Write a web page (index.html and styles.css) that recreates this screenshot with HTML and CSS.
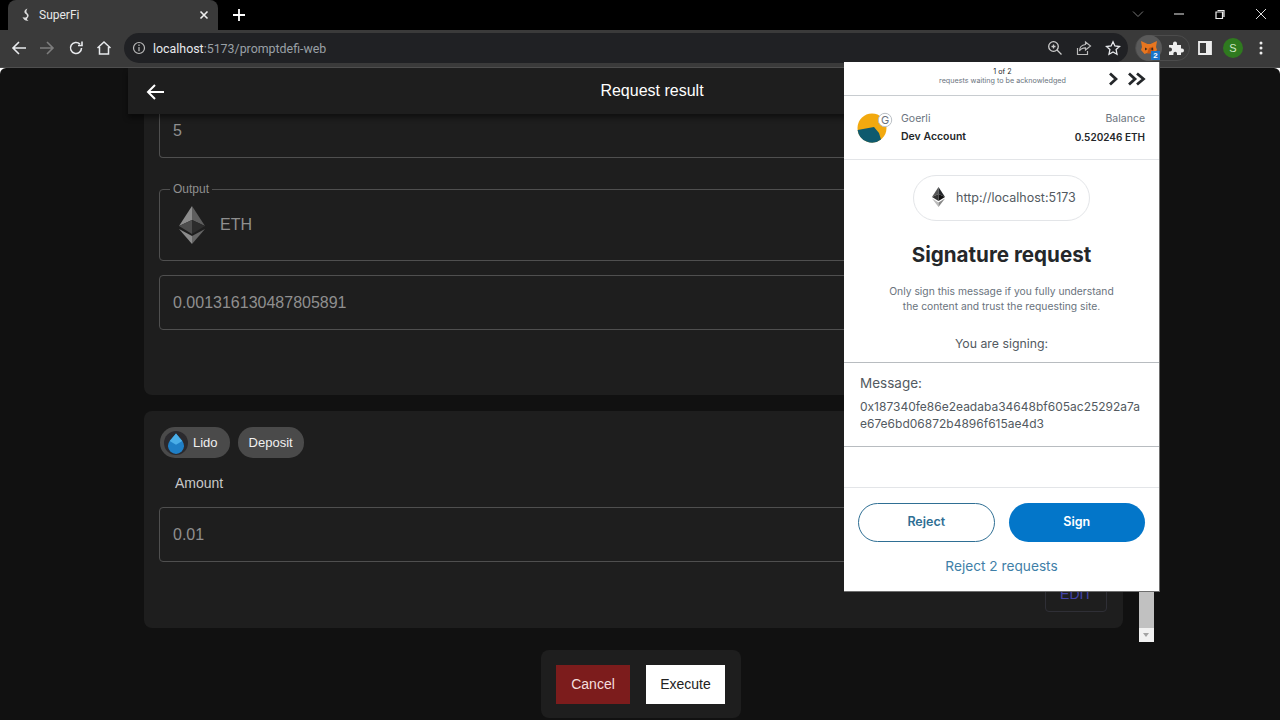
FILE: index.html
```html
<!DOCTYPE html>
<html lang="en">
<head>
    <meta charset="UTF-8">
    <title>SuperFi</title>
    <link rel="stylesheet" href="styles.css">
</head>
<body>
    <div class="tabstrip">
        <div class="tab">
            <svg class="tab_icon" width="16" height="16" viewBox="0 0 16 16"><path d="M9.500 1.500C7 2.500 6 4 6.500 5.500c.5 1.500 2.500 1.500 2.500 3.500 0 1.500-2 2-4.500 1 1 2.500 3.500 4.500 6 3.500-1.500-.5-2-1.500-1-2.500 1.500-1.500 1.500-3.500 0-4.500-1.500-1-1.500-3 0-5z" fill="#ddd"/></svg>
            <span class="tab_title">SuperFi</span>
            <svg class="tab_close" width="10" height="10" viewBox="0 0 10 10"><path d="M1.500 1.500l7 7M8.500 1.500l-7 7" stroke="#eee" stroke-width="1.600"/></svg>
        </div>
        <svg class="new_tab" width="14" height="14" viewBox="0 0 14 14"><path d="M7 1v12M1 7h12" stroke="#fff" stroke-width="1.800"/></svg>
        <div class="win_controls">
            <svg width="12" height="12" viewBox="0 0 12 12"><path d="M1 3.500l5 5 5-5" fill="none" stroke="#777" stroke-width="1"/></svg>
            <svg width="12" height="12" viewBox="0 0 12 12"><path d="M1 6h10" stroke="#eee" stroke-width="1"/></svg>
            <svg width="12" height="12" viewBox="0 0 12 12"><path d="M3.500 2.500h6.500v6.500M2 4h6.500v6.500h-6.500z" fill="none" stroke="#eee" stroke-width="1.200"/></svg>
            <svg width="12" height="12" viewBox="0 0 12 12"><path d="M1 1l10 10M11 1l-10 10" stroke="#ddd" stroke-width="1"/></svg>
        </div>
    </div>

    <div class="toolbar">
        <svg class="tool" width="16" height="16" viewBox="0 0 16 16"><path d="M15 8H2M8 2L2 8l6 6" fill="none" stroke="#e8eaed" stroke-width="1.600"/></svg>
        <svg class="tool" width="16" height="16" viewBox="0 0 16 16"><path d="M1 8h13M8 2l6 6-6 6" fill="none" stroke="#7d7d7d" stroke-width="1.600"/></svg>
        <svg class="tool tool_reload" width="16" height="16" viewBox="0 0 16 16"><path d="M13.500 8a5.500 5.500 0 1 1-1.600-3.900M14 1.500v4h-4" fill="none" stroke="#e8eaed" stroke-width="1.600"/></svg>
        <svg class="tool" width="16" height="16" viewBox="0 0 16 16"><path d="M1.500 8L8 2l6.500 6M3.500 7v7h9V7" fill="none" stroke="#e8eaed" stroke-width="1.500"/></svg>
        <div class="omnibox">
            <svg width="14" height="14" viewBox="0 0 14 14"><circle cx="7" cy="7" r="5.500" fill="none" stroke="#bbb" stroke-width="1.200"/><path d="M7 6v4.200M7 3.600v1.400" stroke="#bbb" stroke-width="1.200"/></svg>
            <span class="url"><span class="url_host">localhost</span>:5173/promptdefi-web</span>
            <div class="omni_icons">
                <svg width="16" height="16" viewBox="0 0 16 16"><circle cx="6.500" cy="6.500" r="4.800" fill="none" stroke="#ccc" stroke-width="1.300"/><path d="M10 10l4.500 4.500M6.500 4.500v4M4.500 6.500h4" stroke="#ccc" stroke-width="1.300"/></svg>
                <svg width="16" height="16" viewBox="0 0 16 16"><path d="M1.500 8v6.500h10V11M9.500 2l5 4-5 4V7.800c-3 0-5 1-6 3.200 0-3.500 2-6 6-6.500z" fill="none" stroke="#bbb" stroke-width="1.200"/></svg>
                <svg width="16" height="16" viewBox="0 0 16 16"><path d="M8 1.800l1.900 4.200 4.600.5-3.400 3.100.9 4.600L8 11.900l-4 2.300.9-4.600L1.500 6.500l4.600-.5z" fill="none" stroke="#e8eaed" stroke-width="1.300"/></svg>
            </div>
        </div>
        <div class="ext_group">
            <div class="ext_fox">
                <svg width="18" height="16" viewBox="0 0 18 16"><path d="M1 1l6.500 3h3L17 1l-1 6 1 3-3.500 4-2.500-1H7l-2.500 1L1 10l1-3z" fill="#e8761f"/><path d="M9 8l4-1.500 1 3.500-3 3.500H7z" fill="#c9560f"/><path d="M5 7.500l2.500 1.500L5 10.500zM13 7.500l-2.500 1.500 2.500 1.500z" fill="#3a2a20"/></svg>
                <span class="ext_badge">2</span>
            </div>
            <svg class="ext_puzzle" width="16" height="16" viewBox="0 0 16 16"><path d="M1 5h4V3.500a2 2 0 0 1 4 0V5h4v3.500h1a2 2 0 0 1 0 4h-1V15H9v-1.500a1.800 1.800 0 0 0-3.600 0V15H1v-3.500h1a2 2 0 0 0 0-4H1z" fill="#eee"/></svg>
        </div>
        <svg class="tool_side" width="14" height="14" viewBox="0 0 14 14"><path d="M1 1h12v12H1z" fill="none" stroke="#eee" stroke-width="1.800"/><path d="M8 1h5v12H8z" fill="#eee"/></svg>
        <div class="avatar">S</div>
        <svg class="tool_dots" width="4" height="14" viewBox="0 0 4 14"><circle cx="2" cy="2" r="1.500" fill="#eee"/><circle cx="2" cy="7" r="1.500" fill="#eee"/><circle cx="2" cy="12" r="1.500" fill="#eee"/></svg>
    </div>

    <div class="page">
        <div class="app">
            <div class="header">
                <svg class="back" width="24" height="24" viewBox="0 0 24 24"><path d="M20 12H5M11 5l-7 7 7 7" fill="none" stroke="#fff" stroke-width="2"/></svg>
                <h1 class="title">Request result</h1>
            </div>
            <div class="scroller">
                <div class="cards">
                    <div class="card card_first">
                        <div class="field field_cut">5</div>
                        <fieldset class="field_token">
                            <legend>Output</legend>
                            <svg width="26" height="38" viewBox="0 0 26 38"><path d="M13 0L0 20l13-6z" fill="#8c8c8c"/><path d="M13 0l13 20-13-6z" fill="#5e5e5e"/><path d="M13 14L0 20l13 8z" fill="#4d4d4d"/><path d="M13 14l13 6-13 8z" fill="#2c2c2c"/><path d="M0 23l13 15v-8z" fill="#8c8c8c"/><path d="M26 23L13 38v-8z" fill="#666"/></svg>
                            <span>ETH</span>
                        </fieldset>
                        <div class="field">0.001316130487805891</div>
                        <div class="actions"><button class="edit">Edit</button></div>
                    </div>
                    <div class="card">
                        <div class="chips">
                            <div class="chip chip_lido">
                                <svg width="24" height="24" viewBox="0 0 24 24"><circle cx="12" cy="12" r="12" fill="#2b2a2e"/><path d="M12 2.500l6.300 7.500a8 8 0 1 1-12.600 0z" fill="#1f7fc6"/><path d="M12 2.500l6.300 7.500-6.300 3.800-6.300-3.800z" fill="#4aaee8"/></svg>
                                <span>Lido</span>
                            </div>
                            <div class="chip">Deposit</div>
                        </div>
                        <div class="label">Amount</div>
                        <div class="field">0.01</div>
                        <div class="actions"><button class="edit">Edit</button></div>
                    </div>
                </div>
                <div class="scrollbar">
                    <div class="scroll_thumb"></div>
                    <div class="scroll_down"></div>
                </div>
            </div>
            <div class="footer">
                <div class="footer_box">
                    <button class="btn_cancel">Cancel</button>
                    <button class="btn_execute">Execute</button>
                </div>
            </div>
        </div>
    </div>

    <div class="popup">
        <div class="pop_nav">
            <div class="pop_count">
                <div class="pop_count_num">1 of 2</div>
                <div>requests waiting to be acknowledged</div>
            </div>
            <svg class="pop_next" width="10" height="14" viewBox="0 0 10 14"><path d="M2 1.500L8 7l-6 5.500" fill="none" stroke="#24272a" stroke-width="2.800"/></svg>
            <svg class="pop_last" width="19" height="14" viewBox="0 0 19 14"><path d="M2 1.500L8 7l-6 5.500M10 1.500L16.500 7 10 12.500" fill="none" stroke="#24272a" stroke-width="2.800"/></svg>
        </div>
        <div class="pop_account">
            <div class="identicon">
                <svg width="37" height="37" viewBox="0 0 37 37"><circle cx="15" cy="22" r="14.500" fill="#f2a90f"/><path d="M.6 24L17 21l5 6 2 6.500A14.500 14.500 0 0 1 .6 24z" fill="#0f5a6e"/><circle cx="28" cy="14" r="6.700" fill="#fff" stroke="#bbc0c5"/></svg>
                <span class="identicon_g">G</span>
            </div>
            <div class="acc_left">
                <div class="acc_top">Goerli</div>
                <div class="acc_bold">Dev Account</div>
            </div>
            <div class="acc_right">
                <div class="acc_top">Balance</div>
                <div class="acc_bold acc_amount">0.520246 ETH</div>
            </div>
        </div>
        <div class="pop_site">
            <div class="site_pill">
                <svg width="13" height="20" viewBox="0 0 13 20"><path d="M6.500 0L0 10l6.500-3z" fill="#555"/><path d="M6.500 0L13 10 6.500 7z" fill="#24272a"/><path d="M6.500 7L0 10l6.500 4z" fill="#333"/><path d="M6.500 7L13 10l-6.500 4z" fill="#111"/><path d="M0 11.500L6.500 20v-4.500z" fill="#bbb"/><path d="M13 11.500L6.500 20v-4.500z" fill="#888"/></svg>
                <span>http://localhost:5173</span>
            </div>
        </div>
        <h2 class="pop_title">Signature request</h2>
        <p class="pop_desc">Only sign this message if you fully understand<br>the content and trust the requesting site.</p>
        <div class="pop_signing">You are signing:</div>
        <div class="pop_msg">
            <div class="msg_label">Message:</div>
            <div class="msg_hex">0x187340fe86e2eadaba34648bf605ac25292a7ae67e6bd06872b4896f615ae4d3</div>
        </div>
        <div class="pop_spacer"></div>
        <div class="pop_foot">
            <div class="pop_btns">
                <button class="pop_reject">Reject</button>
                <button class="pop_sign">Sign</button>
            </div>
            <div class="pop_reject_all">Reject 2 requests</div>
        </div>
    </div>
</body>
</html>
```

FILE: styles.css
```css
html, body {
    margin: 0;
    padding: 0;
    height: 720px;
    overflow: hidden;
    background-color: #fff;
    font-family: "Liberation Sans", Arial, sans-serif;
}
button {
    font-family: inherit;
    cursor: pointer;
}

/* browser frame */
.tabstrip {
    display: flex;
    align-items: center;
    height: 30px;
    background-color: #000;
}
.tab {
    display: flex;
    align-items: center;
    width: 210px;
    height: 30px;
    margin-left: 8px;
    padding: 0 9px 0 10px;
    box-sizing: border-box;
    background-color: #3a3a3a;
    border-radius: 8px 8px 0 0;
}
.tab_title {
    flex: 1;
    margin-left: 5px;
    color: #e8e8e8;
    font-family: Roboto, sans-serif;
    font-size: 12px;
}
.new_tab {
    margin-left: 14px;
}
.win_controls {
    display: flex;
    margin-left: auto;
    gap: 29px;
    padding: 0 13px 2px 0;
}
.toolbar {
    display: flex;
    align-items: center;
    height: 38px;
    padding-bottom: 1px;
    box-sizing: border-box;
    background-color: #3a3a3a;
    border-bottom: 1px solid #4e4e4e;
}
.tool {
    margin-left: 12px;
}
.tool:first-child {
    margin-left: 11px;
}
.tool_reload {
    margin-left: 13px;
}
.omnibox {
    display: flex;
    align-items: center;
    width: 1004px;
    height: 30px;
    margin-left: 12px;
    padding: 0 7px 0 8px;
    box-sizing: border-box;
    background-color: #202124;
    border-radius: 15px;
}
.url {
    margin-left: 7px;
    color: #9aa0a6;
    font-family: Roboto, sans-serif;
    font-size: 12.4px;
}
.url_host {
    color: #e8eaed;
}
.omni_icons {
    display: flex;
    margin-left: auto;
    gap: 13px;
}
.ext_group {
    display: flex;
    align-items: center;
    height: 26px;
    margin-left: 7px;
    border-radius: 13px;
    border: 1px solid #4c4c4c;
    box-sizing: border-box;
}
.ext_fox {
    position: relative;
    display: flex;
    justify-content: center;
    align-items: center;
    width: 26px;
    height: 26px;
    background-color: #5a5a5a;
    border-radius: 50%;
}
.ext_badge {
    position: absolute;
    right: 2px;
    bottom: 1px;
    width: 9px;
    height: 9px;
    background-color: #1a73c8;
    color: #fff;
    font-size: 8px;
    font-weight: bold;
    line-height: 9px;
    text-align: center;
}
.ext_puzzle {
    margin: 0 5px 0 6px;
}
.tool_side {
    margin-left: 8px;
}
.avatar {
    width: 20px;
    height: 20px;
    margin-left: 11px;
    background-color: #2f7a1f;
    border-radius: 50%;
    color: #cfe8c8;
    font-size: 11px;
    line-height: 20px;
    text-align: center;
}
.tool_dots {
    margin-left: 16px;
}

/* page */
.page {
    height: 652px;
    background-color: #111;
    border-radius: 6px 6px 0 0;
    overflow: hidden;
}
.app {
    display: flex;
    flex-direction: column;
    width: 1026px;
    height: 652px;
    margin-left: 128px;
}
.header {
    position: relative;
    display: flex;
    align-items: center;
    flex-shrink: 0;
    width: 1008px;
    height: 46px;
    padding-left: 16px;
    box-sizing: border-box;
    background-color: #1e1e1e;
    box-shadow: 0 4px 5px rgba(0, 0, 0, 0.45);
}
.back {
    margin-top: 1px;
}
.title {
    flex: 1;
    margin: 0;
    color: #fff;
    font-size: 16px;
    font-weight: normal;
    text-align: center;
}
.scroller {
    display: flex;
    height: 528px;
    overflow: hidden;
}
.cards {
    display: flex;
    flex-direction: column;
    gap: 16px;
    width: 979px;
    padding: 0 16px;
}
.card {
    padding: 16px 16px 16px 15px;
    background-color: #1e1e1e;
    border-radius: 8px;
}
.card_first {
    height: 281px;
    padding-top: 0;
    box-sizing: border-box;
    border-radius: 0 0 8px 8px;
}
.field {
    display: flex;
    align-items: center;
    height: 55px;
    padding-left: 13px;
    box-sizing: border-box;
    border: 1px solid #4f4f4f;
    border-radius: 4px;
    color: #8f8f8f;
    font-size: 16px;
}
.field_cut {
    height: 44px;
    padding-bottom: 9px;
    border-top: none;
    border-radius: 0 0 4px 4px;
}
.field_token {
    display: flex;
    align-items: center;
    height: 79px;
    margin: 24px 0 14px;
    padding: 0 0 6px 19px;
    box-sizing: border-box;
    border: 1px solid #4f4f4f;
    border-radius: 4px;
    color: #8f8f8f;
    font-size: 16px;
}
.field_token legend {
    margin-left: -9px;
    padding: 0 3px;
    color: #8f8f8f;
    font-size: 12px;
    line-height: 14px;
}
.field_token span {
    margin-left: 15px;
}
.actions {
    display: flex;
    justify-content: flex-end;
    margin-top: 14px;
}
.edit {
    width: 62px;
    height: 36px;
    background: none;
    border: 1px solid #2f2f36;
    border-radius: 4px;
    color: #4343a8;
    font-size: 14px;
    text-transform: uppercase;
}
.chips {
    display: flex;
    gap: 8px;
    padding-left: 1px;
}
.chip {
    display: flex;
    align-items: center;
    height: 31px;
    padding: 0 11px;
    background-color: #4a4a4a;
    border-radius: 15px;
    color: #f0f0f0;
    font-size: 13px;
}
.chip_lido {
    gap: 5px;
    padding: 0 12px 0 4px;
}
.label {
    margin: 17px 0 15px 16px;
    color: #c8c8c8;
    font-size: 14px;
    line-height: 17px;
}
.scrollbar {
    display: flex;
    flex-direction: column;
    width: 15px;
    background-color: #f1f1f1;
}
.scroll_thumb {
    flex: 1;
    background-color: #c1c1c1;
}
.scroll_down {
    position: relative;
    height: 14px;
    background-color: #f1f1f1;
}
.scroll_down::after {
    content: "";
    position: absolute;
    left: 4px;
    top: 5px;
    border-left: 3.5px solid transparent;
    border-right: 3.5px solid transparent;
    border-top: 4px solid #a3a3a3;
}
.footer {
    display: flex;
    justify-content: center;
    padding-top: 8px;
}
.footer_box {
    display: flex;
    gap: 16px;
    height: 68px;
    padding: 15px 16px 15px 15px;
    box-sizing: border-box;
    background-color: #1e1e1e;
    border-radius: 8px;
}
.footer_box button {
    height: 39px;
    padding-bottom: 3px;
    border: none;
    font-size: 14px;
}
.btn_cancel {
    width: 74px;
    background-color: #7c1c1c;
    color: #f5dede;
}
.btn_execute {
    width: 79px;
    background-color: #fff;
    color: #222;
}

/* wallet popup over the page */
.popup {
    position: absolute;
    left: 844px;
    top: 62px;
    display: flex;
    flex-direction: column;
    width: 316px;
    height: 530px;
    box-sizing: border-box;
    background-color: #fff;
    border-right: 1px solid #6e6e6e;
    border-bottom: 1px solid #6e6e6e;
    color: #24272a;
    font-family: Inter, sans-serif;
}
.pop_nav {
    display: flex;
    align-items: center;
    flex-shrink: 0;
    height: 34px;
    box-sizing: border-box;
    padding-right: 13px;
    border-bottom: 1px solid #c8ccd0;
}
.pop_count {
    flex: 1;
    margin-top: -6px;
    padding-left: 53px;
    color: #6a737d;
    font-size: 7.2px;
    line-height: 9px;
    text-align: center;
}
.pop_count_num {
    color: #24272a;
}
.pop_next {
    margin-right: 9px;
}
.pop_account {
    display: flex;
    align-items: center;
    flex-shrink: 0;
    height: 64px;
    padding: 0 14px;
    box-sizing: border-box;
    border-bottom: 1px solid #e3e5e8;
}
.identicon {
    position: relative;
    width: 37px;
    height: 37px;
    margin: -7px 7px 0 -1px;
}
.identicon_g {
    position: absolute;
    left: 23px;
    top: 8px;
    width: 10px;
    color: #6a737d;
    font-size: 11px;
    line-height: 12px;
    text-align: center;
}
.acc_left {
    flex: 1;
}
.acc_right {
    text-align: right;
}
.acc_top {
    color: #6a737d;
    font-size: 10.5px;
    line-height: 18px;
}
.acc_bold {
    color: #24272a;
    font-size: 10.5px;
    font-weight: 600;
    line-height: 18px;
}
.acc_amount {
    font-size: 10px;
}
.pop_site {
    display: flex;
    justify-content: center;
    flex-shrink: 0;
    padding-top: 15px;
}
.site_pill {
    display: flex;
    align-items: center;
    gap: 11px;
    width: 177px;
    height: 46px;
    padding: 0 0 2px 18px;
    box-sizing: border-box;
    border: 1px solid #e3e5e8;
    border-radius: 24px;
    color: #535a61;
    font-size: 12.5px;
}
.pop_title {
    margin: 21px 0 0;
    font-size: 20.6px;
    font-weight: 700;
    line-height: 26px;
    text-align: center;
}
.pop_desc {
    margin: 16px 0 0;
    color: #6a737d;
    font-size: 10.3px;
    line-height: 15px;
    text-align: center;
}
.pop_signing {
    margin-top: 22px;
    color: #535a61;
    font-size: 12.3px;
    line-height: 16px;
    text-align: center;
}
.pop_msg {
    height: 85px;
    margin-top: 10px;
    padding: 12px 16px 0;
    box-sizing: border-box;
    border-top: 1px solid #b8bcc0;
    border-bottom: 1px solid #b8bcc0;
    color: #535a61;
}
.msg_label {
    font-size: 13.5px;
    line-height: 17px;
}
.msg_hex {
    margin-top: 6px;
    font-size: 12px;
    line-height: 17px;
    word-break: break-all;
}
.pop_spacer {
    height: 40px;
    flex-shrink: 0;
}
.pop_foot {
    flex: 1;
    padding: 15px 14px 0;
    border-top: 1px solid #e3e5e8;
}
.pop_btns {
    display: flex;
    gap: 14px;
}
.pop_btns button {
    width: 137px;
    height: 39px;
    padding-bottom: 3px;
    border-radius: 20px;
    font-family: Inter, sans-serif;
    font-size: 12.5px;
    font-weight: 600;
}
.pop_reject {
    background-color: #fff;
    border: 1px solid #2f6f94;
    color: #2f6f94;
}
.pop_sign {
    background-color: #0376c9;
    border: none;
    color: #fff;
}
.pop_reject_all {
    margin-top: 15px;
    color: #3f7fa8;
    font-size: 13.7px;
    line-height: 18px;
    text-align: center;
}
```
